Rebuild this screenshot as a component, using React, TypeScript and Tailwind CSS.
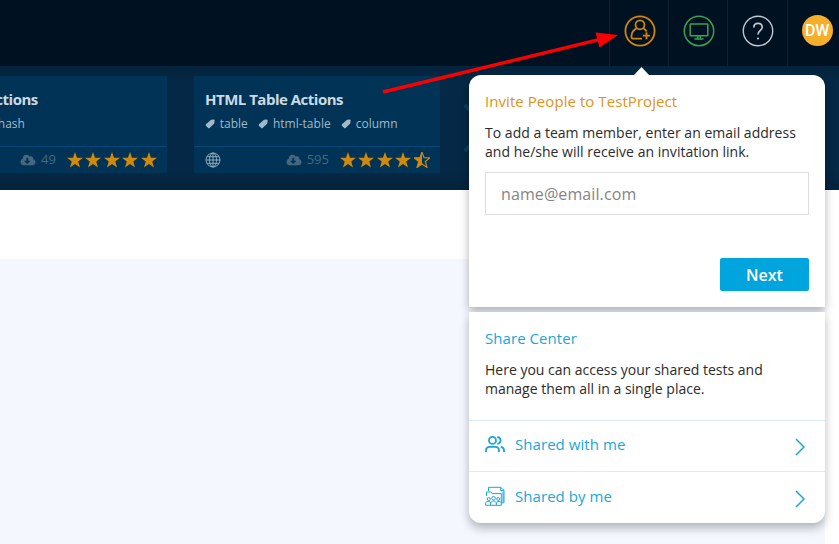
import React from "react";
import { FaCloudDownloadAlt } from "react-icons/fa";

const STAR = "M10 1 L12.3 7.4 L19 7.6 L13.7 11.7 L15.6 18.4 L10 14.5 L4.4 18.4 L6.3 11.7 L1 7.6 L7.7 7.4 Z";

function Star({ half }: { half?: boolean }) {
  return (
    <svg viewBox="1 1 18 18" className="h-[16px] w-[16px] shrink-0" fill="#d0890f">
      {half ? (
        <>
          <path d="M10 1 L7.7 7.4 L1 7.6 L6.3 11.7 L4.4 18.4 L10 14.5 Z" />
          <path d={STAR} fill="none" stroke="#d0890f" strokeWidth="1.3" />
        </>
      ) : (
        <path d={STAR} />
      )}
    </svg>
  );
}

function Card({ title, tags, downloads, half, indent }: { title: string; tags: string[]; downloads: string; half?: boolean; indent?: boolean }) {
  return (
    <div className="flex h-[97px] w-[246px] shrink-0 flex-col bg-[#003355]">
      <div className={indent ? "h-[70px] pl-[62px] pt-[13px]" : "h-[70px] pl-[11px] pt-[13px]"}>
        <div className={indent ? "ml-[2.5px] h-[20px] whitespace-nowrap text-[15px] font-bold leading-[20px] tracking-[-0.5px] text-[#ccd9e3]" : "h-[20px] whitespace-nowrap text-[15px] font-bold leading-[20px] tracking-[-0.5px] text-[#ccd9e3]"}>{title}</div>
        <div className="mt-[6px] flex h-[18px] items-center gap-[10.3px] text-[12px] leading-[18px] text-[#a0b9ca]">
          {tags.map((t) => (
            <span key={t} className="flex items-center gap-[4.8px] whitespace-nowrap">
              <svg viewBox="0 0 10 10" className="h-[10px] w-[10px]" fill="#a0b9ca">
                <path d="M6 .8L8.8.6Q9.7.6 9.6 1.6L9.3 4.4 4.6 9.1Q3.9 9.7 3.2 9.1L.9 6.8Q.3 6 1 5.3Z" />
              </svg>
              {t}
            </span>
          ))}
        </div>
      </div>
      <div className="flex h-[27px] items-center border-t border-[#074779] pl-[11px] pr-[11px]">
        <svg viewBox="0 0 16 16" className="h-4 w-4" fill="none" stroke="#9bb4c4" strokeWidth="0.9">
          <circle cx="8" cy="8" r="7" />
          <ellipse cx="8" cy="8" rx="3.5" ry="7" />
          <path d="M8 1v14M1 8h14M2 4.7h12M2 11.3h12" />
        </svg>
        <FaCloudDownloadAlt className="ml-auto h-[12px] w-[16px] text-[#476780]" />
        <span className="ml-[5px] text-[13px] text-[#476780]">{downloads}</span>
        <div className="ml-[11px] mr-[-0.5px] flex gap-[2.4px]">
          {[0, 1, 2, 3, 4].map((i) => (
            <Star key={i} half={half && i === 4} />
          ))}
        </div>
      </div>
    </div>
  );
}

function HeaderCell({ children }: { children: React.ReactNode }) {
  return <div className="flex w-[59.2px] shrink-0 justify-center border-l border-[#0e2232] pl-[1px] pt-[15px]">{children}</div>;
}

function ShareRow({ icon, label }: { icon: React.ReactNode; label: string }) {
  return (
    <div className="flex h-[52px] items-center border-t border-[#dfeaf7] pl-4 pr-[20px] text-[15px] text-[#18a7d8]">
      <div className="mb-[4px] flex w-[30px] items-center">{icon}</div>
      <span className="mb-[3px] tracking-[0.06px]">{label}</span>
      <svg viewBox="0 0 10 18" className="ml-auto mt-[2px] h-[18px] w-[10px]" fill="none" stroke="#18a7d8" strokeWidth="1.5">
        <path d="M1 1l8 8-8 8" />
      </svg>
    </div>
  );
}

export default function App() {
  return (
    <div className="relative flex h-[544px] w-[839px] flex-col overflow-hidden bg-white font-['Open_Sans',sans-serif]">
      <header className="flex h-[66px] shrink-0 bg-[#001122] pl-[609px]">
        <HeaderCell>
          <svg viewBox="0 0 32 32" className="h-8 w-8" fill="none" stroke="#d0850f" strokeWidth="1.8">
            <circle cx="16" cy="16" r="14.6" />
            <circle cx="16" cy="9.8" r="4.5" />
            <path d="M12.6 13.3c-3.5 1.5-5 4.5-5.2 8.2-.1 1.3.6 2.2 2 2.2H18M19.4 13.3c1.6.8 2.5 1.8 3.2 3.2M22.5 17.2v7M19 20.7h7" />
          </svg>
        </HeaderCell>
        <HeaderCell>
          <svg viewBox="0 0 32 32" className="h-8 w-8" fill="none" stroke="#38a352" strokeWidth="1.5">
            <circle cx="16" cy="16" r="14.7" />
            <rect x="7.2" y="9" width="17.6" height="11.8" rx="0.6" />
            <path d="M14.7 21v2.7M17.3 21v2.7M11.5 24h9" />
          </svg>
        </HeaderCell>
        <HeaderCell>
          <svg viewBox="0 0 32 32" className="h-8 w-8" fill="none" stroke="#c0c8d1" strokeWidth="1.4">
            <circle cx="16" cy="16" r="14.7" />
            <path d="M11.8 12.5c0-2.5 1.7-4.2 4.2-4.2s4.2 1.6 4.2 3.9c0 3.1-4.2 3.2-4.2 7.3" strokeWidth="1.7" />
            <circle cx="16" cy="23.5" r="1.1" fill="#c0c8d1" stroke="none" />
          </svg>
        </HeaderCell>
        <HeaderCell>
          <div className="flex h-[31px] w-[31px] items-center justify-center rounded-full bg-[#f6ae2d] font-[Roboto,sans-serif] text-[16px] font-medium text-white">DW</div>
        </HeaderCell>
      </header>
      <section className="flex h-[124px] shrink-0 overflow-hidden bg-[#04294b] bg-[linear-gradient(#04233c,#042845_15px,#042845_85%,#04233c)] pt-[10px]">
        <div className="-ml-[79px] flex gap-[27px]">
          <Card title="Actions" tags={["hash"]} downloads="49" indent />
          <Card title="HTML Table Actions" tags={["table", "html-table", "column"]} downloads="595" half />
          <svg viewBox="0 0 28 50" className="-ml-[4px] mt-[27px] h-[50px] w-[28px] shrink-0" fill="none" stroke="#0d3b60" strokeWidth="4">
            <path d="M2 2l22 23L2 48" />
          </svg>
        </div>
      </section>
      <main className="mt-[69px] w-[825px] flex-1 bg-[#f4f8fe]" />

      <div className="absolute left-[469px] top-[75px] w-[356px] text-[#2b2b2b]">
        <div className="absolute left-[165px] top-[-8px] h-[8px] w-[15px] bg-white [clip-path:polygon(50%_0,100%_100%,0_100%)]" />
        <div className="flex h-[232px] flex-col rounded-t-[12px] bg-white px-4 shadow-[0_4px_10px_rgba(0,0,0,0.3)]">
          <h2 className="mt-[15px] h-[22px] whitespace-nowrap text-[15px] leading-[22px] tracking-[0.06px] text-[#e0921d]">Invite People to TestProject</h2>
          <p className="mt-[11px] h-[39px] whitespace-nowrap text-[14px] leading-[19px] tracking-[0.02px]">To add a team member, enter an email address<br />and he/she will receive an invitation link.</p>
          <input className="mt-[10px] h-[43px] w-[324px] shrink-0 border border-[#dedede] bg-white px-[15px] text-[16px] tracking-[0.1px] placeholder-[#858585] outline-none" placeholder="name@email.com" />
          <button className="ml-auto mt-[43px] h-[33px] w-[89px] shrink-0 rounded-[2px] bg-[#00a5de] text-[16px] font-semibold text-white">Next</button>
        </div>
        <div className="mt-[5px] flex h-[211px] flex-col rounded-b-[12px] bg-white shadow-[0_5px_10px_rgba(0,0,0,0.28)]">
          <div className="h-[108px] px-4 pt-[15px]">
            <h2 className="h-[22px] text-[15px] leading-[22px] tracking-[0.06px] text-[#18a7d8]">Share Center</h2>
            <p className="mt-[11px] whitespace-nowrap text-[14px] leading-[19px]">Here you can access your shared tests and<br />manage them all in a single place.</p>
          </div>
          <ShareRow
            label="Shared with me"
            icon={
              <svg viewBox="0 0 20 16" className="h-4 w-5" fill="none" stroke="#18a7d8" strokeWidth="1.8">
                <circle cx="7.5" cy="4.4" r="3.5" />
                <path d="M1 16v-1.5c0-2.5 1.4-3.7 3.7-3.7h5.6c2.3 0 3.7 1.2 3.7 3.7V16M12.3 1c4.4.8 4.4 6 0 6.8M15.8 10.8c2.2.4 3.2 1.7 3.2 3.7V16" />
              </svg>
            }
          />
          <ShareRow
            label="Shared by me"
            icon={
              <svg viewBox="0 0 20 20" className="h-5 w-5" fill="none" stroke="#18a7d8" strokeWidth="1">
                <path d="M3.5 5V1.3h12.3L19 4.5v12.3h-2.5M15.7 1.3v3.2H19M1.5 10V6h4l2 1.6h8.8v10M18 6v10" />
                <circle cx="3.7" cy="13" r="1.5" />
                <circle cx="8.5" cy="12.3" r="1.8" />
                <circle cx="13.3" cy="13" r="1.5" />
                <path d="M.7 19.3v-2c0-2.6 4.6-2.6 5 0 .5-3 5.2-3 5.6 0 .5-2.6 5-2.6 5 0v2zM5.7 17v2M11.3 17v2" />
              </svg>
            }
          />
        </div>
      </div>

      <svg className="absolute left-0 top-0 h-[120px] w-[839px]" viewBox="0 0 839 120" fill="#fa0000">
        <path d="M383 92L602 38.8" stroke="#fa0000" strokeWidth="3.4" />
        <path d="M618 35L595.5 32.5L599.5 47.5Z" />
      </svg>
    </div>
  );
}
